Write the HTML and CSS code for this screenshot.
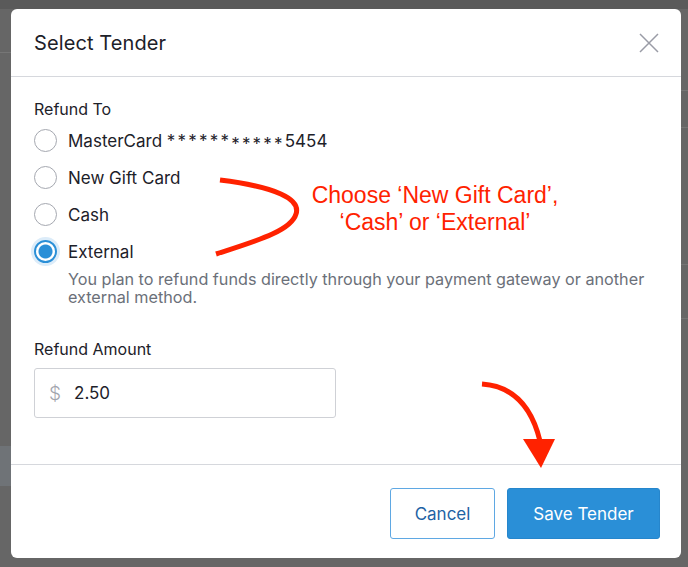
FILE: index.html
```html
<!DOCTYPE html>
<html>
  <head>
    <title>Select Tender</title>
    <link rel="stylesheet" href="styles.css">
  </head>
  <body>
    <div class="modal">
      <div class="modal-head">
        <h1>Select Tender</h1>
        <svg class="close" width="20" height="20" viewBox="0 0 20 20">
          <path d="M1 1 L19 19 M19 1 L1 19" stroke="#9a9ca6" stroke-width="1.5" fill="none"/>
        </svg>
      </div>
      <div class="modal-body">
        <div class="label">Refund To</div>
        <div class="option"><span class="radio"></span><span>MasterCard <span class="stars">******</span><span class="stars low">*****</span>5454</span></div>
        <div class="option"><span class="radio"></span><span>New Gift Card</span></div>
        <div class="option"><span class="radio"></span><span>Cash</span></div>
        <div class="option"><span class="radio checked"></span><span>External</span></div>
        <p class="hint">You plan to refund funds directly through your payment gateway or another external method.</p>

        <div class="label amount-label">Refund Amount</div>
        <div class="money">
          <span class="cur">$</span>
          <span class="val">2.50</span>
        </div>
      </div>
      <div class="modal-foot">
        <button class="btn cancel">Cancel</button>
        <button class="btn save">Save Tender</button>
      </div>

      <!-- annotation marks drawn over the dialog -->
      <svg class="marks" width="670" height="549" viewBox="0 0 670 549">
        <path d="M209 171 C 265 178, 290 190, 285 205 C 280 222, 245 232, 205 245" stroke="#ff2200" stroke-width="5" fill="none"/>
        <text x="424" y="194" class="note">Choose ‘New Gift Card’,</text>
        <text x="424" y="221" class="note">‘Cash’ or ‘External’</text>
        <path d="M471 375 C 500 377, 520 395, 529 432" stroke="#ff2200" stroke-width="5" fill="none"/>
        <path d="M512 430 L544 430 L530 459 Z" fill="#ff2200"/>
      </svg>
    </div>
  </body>
</html>
```

FILE: styles.css
```css
* { padding: 0; margin: 0; box-sizing: border-box; }

body {
  width: 688px;
  height: 567px;
  overflow: hidden;
  background:
    linear-gradient(#5a5a5a, #5a5a5a) 0 0 / 100% 9px no-repeat,
    linear-gradient(#767676, #767676) 0 52px / 11px 1px no-repeat,
    linear-gradient(#767676, #767676) 681px 90px / 7px 1px no-repeat,
    linear-gradient(#767676, #767676) 681px 127px / 7px 1px no-repeat,
    linear-gradient(#747474, #747474) 681px 264px / 7px 1px no-repeat,
    linear-gradient(#747474, #747474) 681px 318px / 7px 1px no-repeat,
    linear-gradient(#6f7377, #6f7377) 0 446px / 11px 40px no-repeat,
    #666666;
  font-family: Inter, "Noto Sans", sans-serif;
  color: #1d2129;
  padding: 9px 7px 9px 11px;
}

.modal {
  position: relative;
  background: white;
  border-radius: 6px;
  height: 549px;
  display: flex;
  flex-direction: column;
}

.modal-head {
  height: 68px;
  border-bottom: 1px solid #d6d8dd;
  display: flex;
  align-items: center;
  justify-content: space-between;
  padding: 0 22px 0 23px;
}

.modal-head h1 {
  font-size: 20px;
  font-weight: 400;
  letter-spacing: 0.1px;
}

.modal-body {
  flex: 1;
  padding: 22px 23px 0;
}

.label {
  font-size: 16px;
  line-height: 20px;
  height: 23px;
}

.option {
  height: 37px;
  display: flex;
  align-items: center;
  font-size: 17px;
  gap: 11px;
}

.stars { letter-spacing: 2.2px; }
.low { position: relative; top: 3px; }

.radio {
  width: 23px;
  height: 23px;
  border: 1.5px solid #a5a8b0;
  border-radius: 50%;
  background: white;
}

.radio.checked {
  border: 2px solid #2a8fd7;
  box-shadow: 0 0 0 3px #dcecf9;
  background: radial-gradient(circle, #2a8fd7 0 6.5px, white 7.5px);
}

.hint {
  padding-left: 34px;
  font-size: 16.2px;
  line-height: 18px;
  color: #6b7079;
}

.amount-label {
  margin-top: 33px;
  height: 29px;
}

.money {
  width: 302px;
  height: 50px;
  border: 1px solid #cfd1d6;
  border-radius: 3px;
  display: flex;
  align-items: center;
  padding-left: 14px;
  gap: 13px;
  font-size: 17px;
}

.cur { color: #a2a5ad; font-size: 19px; font-weight: 300; }

.modal-foot {
  border-top: 1px solid #d6d8dd;
  height: 94px;
  display: flex;
  justify-content: flex-end;
  align-items: flex-start;
  padding: 23px 21px 0;
  gap: 12px;
}

.btn {
  height: 51px;
  border-radius: 3px;
  font-family: Inter, "Noto Sans", sans-serif;
  font-size: 17px;
}

.cancel {
  width: 105px;
  background: white;
  border: 1.5px solid #5fa8e3;
  color: #1f63a4;
}

.save {
  width: 153px;
  background: #2a8fd7;
  border: 1px solid #2686cc;
  color: white;
}

.marks {
  position: absolute;
  left: 0;
  top: 0;
  pointer-events: none;
}

.note {
  font-family: "Liberation Sans", Arial, sans-serif;
  font-size: 23px;
  fill: #ff2200;
  text-anchor: middle;
}
```
